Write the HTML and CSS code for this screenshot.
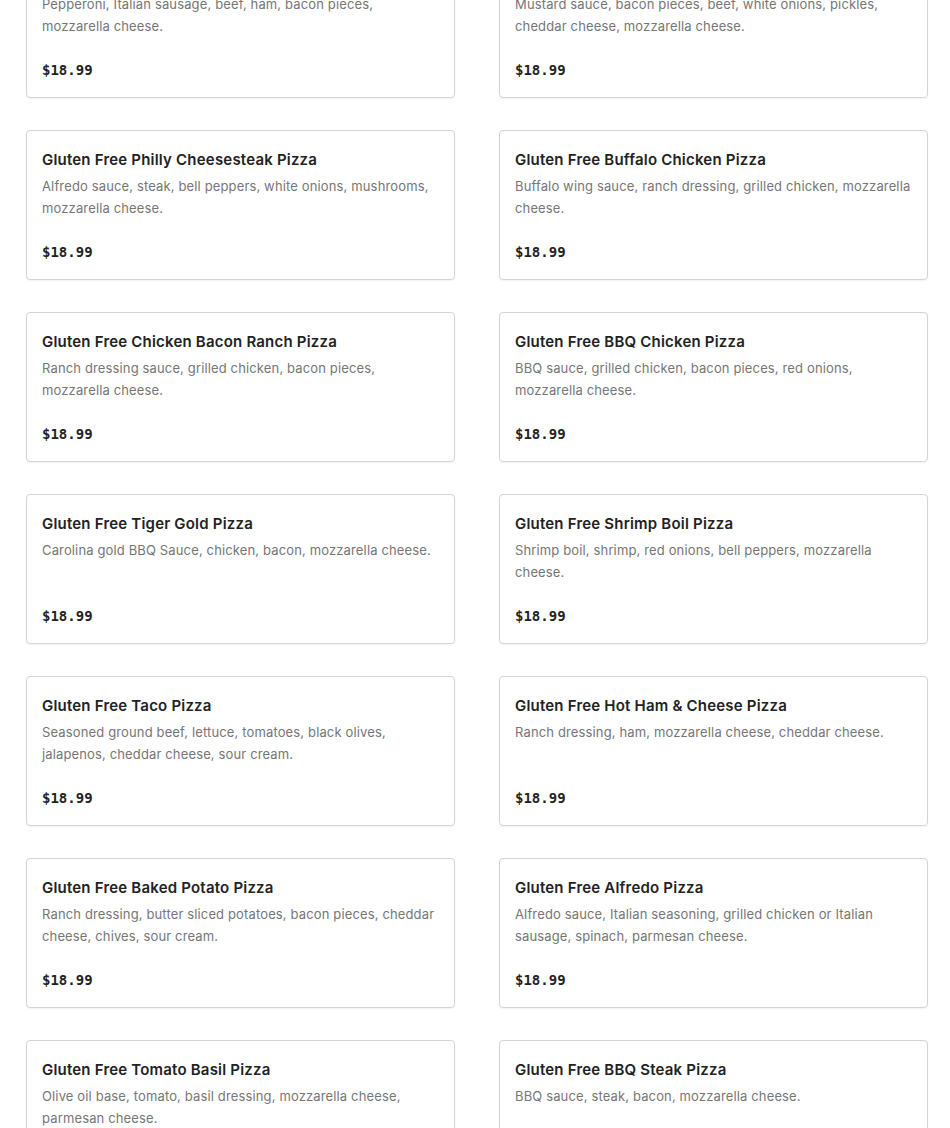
FILE: index.html
```html
<!DOCTYPE html>
<html lang="en">
<head>
<meta charset="utf-8">
<title>Gluten Free Pizza</title>
<link rel="stylesheet" href="styles.css">
</head>
<body>
<main class="menu">
  <div class="card"><h3 class="title">Gluten Free Meat Lovers Pizza</h3><p class="desc">Pepperoni, Italian sausage, beef, ham, bacon pieces, mozzarella cheese.</p><div class="price">$18.99</div></div>
  <div class="card"><h3 class="title">Gluten Free Cheeseburger Pizza</h3><p class="desc">Mustard sauce, bacon pieces, beef, white onions, pickles, cheddar cheese, mozzarella cheese.</p><div class="price">$18.99</div></div>
  <div class="card"><h3 class="title">Gluten Free Philly Cheesesteak Pizza</h3><p class="desc">Alfredo sauce, steak, bell peppers, white onions, mushrooms, mozzarella cheese.</p><div class="price">$18.99</div></div>
  <div class="card"><h3 class="title">Gluten Free Buffalo Chicken Pizza</h3><p class="desc">Buffalo wing sauce, ranch dressing, grilled chicken, mozzarella cheese.</p><div class="price">$18.99</div></div>
  <div class="card"><h3 class="title">Gluten Free Chicken Bacon Ranch Pizza</h3><p class="desc">Ranch dressing sauce, grilled chicken, bacon pieces, mozzarella cheese.</p><div class="price">$18.99</div></div>
  <div class="card"><h3 class="title">Gluten Free BBQ Chicken Pizza</h3><p class="desc">BBQ sauce, grilled chicken, bacon pieces, red onions, mozzarella cheese.</p><div class="price">$18.99</div></div>
  <div class="card"><h3 class="title">Gluten Free Tiger Gold Pizza</h3><p class="desc">Carolina gold BBQ Sauce, chicken, bacon, mozzarella cheese.</p><div class="price">$18.99</div></div>
  <div class="card"><h3 class="title">Gluten Free Shrimp Boil Pizza</h3><p class="desc">Shrimp boil, shrimp, red onions, bell peppers, mozzarella cheese.</p><div class="price">$18.99</div></div>
  <div class="card"><h3 class="title">Gluten Free Taco Pizza</h3><p class="desc">Seasoned ground beef, lettuce, tomatoes, black olives, jalapenos, cheddar cheese, sour cream.</p><div class="price">$18.99</div></div>
  <div class="card"><h3 class="title">Gluten Free Hot Ham &amp; Cheese Pizza</h3><p class="desc">Ranch dressing, ham, mozzarella cheese, cheddar cheese.</p><div class="price">$18.99</div></div>
  <div class="card"><h3 class="title">Gluten Free Baked Potato Pizza</h3><p class="desc">Ranch dressing, butter sliced potatoes, bacon pieces, cheddar cheese, chives, sour cream.</p><div class="price">$18.99</div></div>
  <div class="card"><h3 class="title">Gluten Free Alfredo Pizza</h3><p class="desc">Alfredo sauce, Italian seasoning, grilled chicken or Italian sausage, spinach, parmesan cheese.</p><div class="price">$18.99</div></div>
  <div class="card"><h3 class="title">Gluten Free Tomato Basil Pizza</h3><p class="desc">Olive oil base, tomato, basil dressing, mozzarella cheese, parmesan cheese.</p><div class="price">$18.99</div></div>
  <div class="card"><h3 class="title">Gluten Free BBQ Steak Pizza</h3><p class="desc">BBQ sauce, steak, bacon, mozzarella cheese.</p><div class="price">$18.99</div></div>
</main>
</body>
</html>
```

FILE: styles.css
```css
html, body {
  margin: 0;
  padding: 0;
  background: #ffffff;
  overflow: hidden;
}

body {
  font-family: Inter, "Noto Sans", "Liberation Sans", sans-serif;
  color: #222222;
}

.menu {
  display: grid;
  grid-template-columns: 429px 429px;
  column-gap: 44px;
  row-gap: 32px;
  padding: 0 0 40px 26px;
  margin-top: -52px;
}

.card {
  box-sizing: border-box;
  height: 150px;
  border: 1px solid #d4d4d4;
  border-radius: 4px;
  box-shadow: 0 1px 2px rgba(0, 0, 0, 0.06);
  padding: 17px 15px 15px 15px;
  display: flex;
  flex-direction: column;
}

.title {
  margin: 0;
  font-size: 15px;
  font-weight: 600;
  line-height: 24px;
  letter-spacing: 0.2px;
  color: #222222;
}

.desc {
  margin: 3px 0 0 0;
  font-size: 13px;
  line-height: 22px;
  letter-spacing: 0.14px;
  color: #767676;
  min-height: 44px;
}

.price {
  margin-top: 22px;
  font-family: "DejaVu Sans Mono", "Liberation Mono", monospace;
  font-size: 14px;
  font-weight: 700;
  line-height: 22px;
  color: #222222;
}
```
